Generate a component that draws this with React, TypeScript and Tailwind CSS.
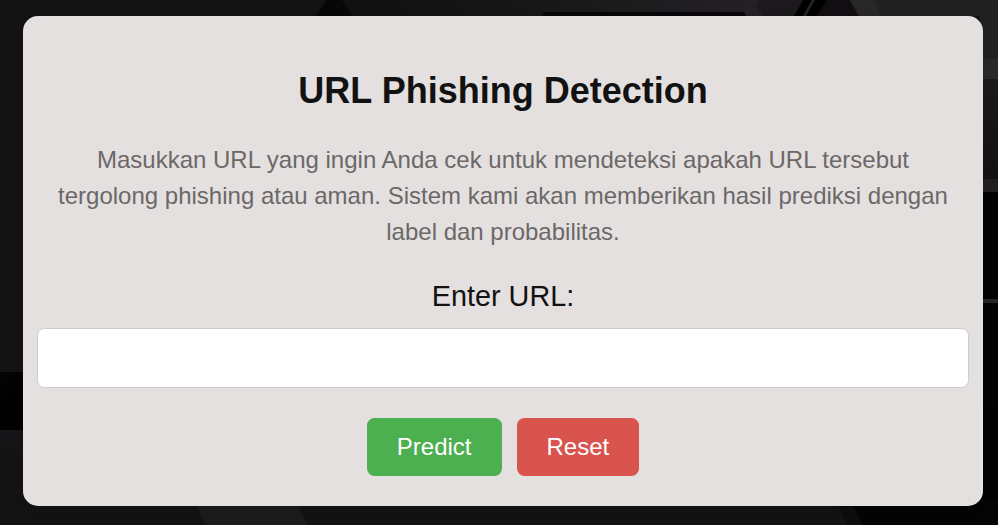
function Backdrop() {
  return (
    <svg className="absolute inset-0 h-full w-full" viewBox="0 0 998 525" preserveAspectRatio="none" aria-hidden="true">
      <defs>
        <linearGradient id="top" x1="330" x2="760" y1="0" y2="0" gradientUnits="userSpaceOnUse">
          <stop offset="0" stopColor="#100f11" />
          <stop offset="0.5" stopColor="#171718" />
          <stop offset="1" stopColor="#242124" />
        </linearGradient>
        <linearGradient id="band" x1="0" x2="0.6" y1="0" y2="1">
          <stop offset="0" stopColor="#060606" />
          <stop offset="0.6" stopColor="#000000" />
        </linearGradient>
        <linearGradient id="side" x1="0" x2="0" y1="0" y2="1">
          <stop offset="0" stopColor="#1c191c" />
          <stop offset="1" stopColor="#141114" />
        </linearGradient>
        <linearGradient id="corner" x1="0" x2="0" y1="0" y2="1">
          <stop offset="0" stopColor="#171518" />
          <stop offset="0.4" stopColor="#131313" />
          <stop offset="1" stopColor="#131313" />
        </linearGradient>
      </defs>
      <rect width="998" height="525" fill="#131313" />
      <rect x="330" width="540" height="16" fill="url(#top)" />
      <polygon points="326,0 342,0 352,16 316,16" fill="#080708" />
      <polygon points="544,12 744,12 746,16 542,16" fill="#080608" />
      <polygon points="759,0 803,0 794,16 763,16 756,6" fill="#1c191c" />
      <polygon points="827,0 850,0 859,16 817,16" fill="#110d11" />
      <polygon points="803,0 827,0 817,16 794,16" fill="#000000" />
      <polygon points="812,0 815,0 806,16 803,16" fill="#242424" />
      <polygon points="850,0 998,0 998,60 980,16 859,16" fill="#222122" />
      <polygon points="850,0 873,0 882,16 859,16" fill="#272727" />
      <rect x="980" y="0" width="18" height="59" fill="#222122" />
      <rect x="980" y="59" width="18" height="20" fill="#292929" />
      <rect x="980" y="79" width="18" height="100" fill="url(#side)" />
      <rect x="980" y="179" width="18" height="13" fill="#211f22" />
      <rect x="980" y="192" width="18" height="333" fill="#040305" />
      <rect x="980" y="299" width="18" height="4" fill="#262626" />
      <rect x="980" y="408" width="18" height="117" fill="#000000" />
      <rect y="372" width="24" height="58" fill="url(#band)" />
      <rect y="430" width="205" height="95" fill="url(#corner)" />
      <polygon points="193,500 297,500 307,525 206,525" fill="#1b1b1b" />
      <polygon points="835,500 852,500 866,525 848,525" fill="#0d0d0d" />
      <polygon points="850,500 998,500 998,525 863,525" fill="#040404" />
    </svg>
  );
}

export default function App() {
  return (
    <main className="relative h-[525px] w-full overflow-hidden bg-[#131313] pt-4 pr-[15px] pl-[23px] font-['Liberation_Sans',Arial,sans-serif]">
      <Backdrop />
      <section className="relative flex h-[490px] flex-col items-center rounded-[15px] bg-[#e4e0df] px-3.5 text-center text-[#121212] shadow-[0_6px_9px_rgba(0,0,0,0.1)]">
        <h1 className="mt-12 text-4xl leading-[54px] font-bold">URL Phishing Detection</h1>
        <p className="mt-6 w-[900px] text-2xl leading-9 text-[#6c6868]">
          Masukkan URL yang ingin Anda cek untuk mendeteksi apakah URL tersebut tergolong phishing atau aman. Sistem kami akan memberikan hasil prediksi dengan label dan probabilitas.
        </p>
        <form className="mt-[25px] w-full" onSubmit={(e) => e.preventDefault()}>
          <label htmlFor="url" className="block text-[28.8px] leading-[43px]">Enter URL:</label>
          <input id="url" type="text" className="mt-[10px] block h-[60px] w-full rounded-[7.5px] border border-[#cccccc] bg-white px-4 text-2xl outline-none" />
          <div className="mt-[30px] flex justify-center gap-[15px] text-2xl text-white">
            <button type="submit" className="h-[58px] rounded-[7.5px] bg-[#4caf50] px-[30px]">Predict</button>
            <button type="reset" className="h-[58px] rounded-[7.5px] bg-[#d9534f] px-[30px]">Reset</button>
          </div>
        </form>
      </section>
    </main>
  );
}
